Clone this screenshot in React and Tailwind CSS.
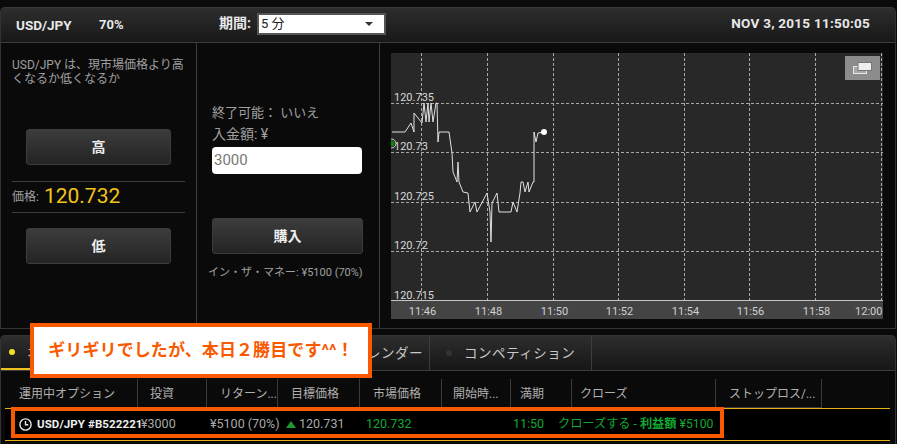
import React from 'react';

const FONT = 'font-["Roboto","Noto_Sans_CJK_JP",sans-serif]';

const xGrid = [421.5, 487.5, 553.5, 618.5, 684.5, 749.5, 815.5, 881.5];
const yGrid = [103.5, 152.5, 202.5, 251.5];
const xLabels = ['11:46', '11:48', '11:50', '11:52', '11:54', '11:56', '11:58', '12:00'];
const yLabels = [
    ['120.735', 394, 101],
    ['120.73', 394, 150],
    ['120.725', 394, 200],
    ['120.72', 394, 249],
    ['120.715', 394, 299],
];

// price line, page coordinates
const linePoints = [
    [392, 132], [405, 132], [411, 123], [414, 132], [414, 113], [422, 123], [424, 103], [426, 122], [428, 103], [429, 122],
    [431, 103], [433, 122], [436, 103], [437, 103], [438, 142], [439, 132], [449, 132], [452, 153], [453, 172], [457, 182],
    [458, 162], [459, 182], [463, 192], [468, 193], [470, 212], [475, 202], [477, 212], [487, 193], [490, 212], [491, 242],
    [492, 203], [497, 193], [499, 212], [511, 212], [513, 202], [517, 212], [520, 193], [521, 182], [523, 182], [525, 192],
    [528, 182], [529, 192], [533, 182], [534, 182], [534, 132], [536, 142], [538, 133], [544, 132],
];

const headers = [
    ['運用中オプション', 'w-[137px] pl-[18px]'],
    ['投資', 'w-[69px] pl-[12px]'],
    ['リターン...', 'w-[71px] pl-[13px]'],
    ['目標価格', 'w-[82px] pl-[13px]'],
    ['市場価格', 'w-[82px] pl-[13px]'],
    ['開始時...', 'w-[69px] pl-[11px]'],
    ['満期', 'w-[61px] pl-[9px]'],
    ['クローズ', 'w-[144px] pl-[8px]'],
    ['ストップロス/...', 'w-[106px] pl-[13px]'],
];

const Button = ({ children, className }) => (
    <button className={`flex items-center justify-center rounded-[3px] border border-[#3c3c3c] bg-gradient-to-b from-[#3c3c3c] to-[#242424] font-bold text-[#eeeeee] ${className}`}>
        {children}
    </button>
);

const Chart = () => (
    <div className="relative h-[266px] w-[492px] bg-[#282828]">
        <svg className="absolute left-0 top-0" width="492" height="266" viewBox="391 53 492 266">
            <rect x="391" y="300" width="492" height="19" fill="#444444" />
            <rect x="391" y="300" width="492" height="1" fill="#c4c4c4" />
            {xGrid.map((x) => (
                <line key={x} x1={x} x2={x} y1="53" y2="300" stroke="#a8a8a8" strokeDasharray="3 2" />
            ))}
            {yGrid.map((y) => (
                <line key={y} x1="391" x2="883" y1={y} y2={y} stroke="#a8a8a8" strokeDasharray="3 2" />
            ))}
            <polyline points={linePoints.map((p) => p.join(',')).join(' ')} fill="none" stroke="#e0e0e0" strokeWidth="1" />
            <circle cx="544" cy="132" r="3" fill="#ffffff" />
            {yLabels.map(([t, x, y]) => (
                <text key={t} x={x} y={y} fontSize="11" fill="#d8d8d8" fontFamily="Roboto, sans-serif">{t}</text>
            ))}
            <circle cx="391.5" cy="143.5" r="4.5" fill="#282828" stroke="#d8d8d8" />
            <circle cx="391.5" cy="143.5" r="3" fill="#0a8a0a" />
            {xLabels.map((t, i) => (
                <text key={t} x={xGrid[i] + 1} y="315" fontSize="11" textAnchor={i === 7 ? 'end' : 'middle'} fill="#d0d0d0" fontFamily="Roboto, sans-serif">{t}</text>
            ))}
        </svg>
        <div className="absolute right-[3px] top-[3px] flex h-[24px] w-[35px] items-center justify-center bg-[#8c8c8c]">
            <svg width="19" height="12" viewBox="0 0 19 12">
                <rect x="0.5" y="4.5" width="13" height="7" fill="#a8a8a8" stroke="#e8e8e8" />
                <rect x="5" y="0.5" width="13.5" height="8" fill="#eeeeee" stroke="#777777" />
            </svg>
        </div>
    </div>
);

export default function App() {
    return (
        <div className={`relative h-[444px] w-[897px] overflow-hidden bg-[#0a0a0a] pt-[7px] ${FONT}`}>
            {/* Trade panel */}
            <div className="h-[322px] w-[896px] rounded-t-[5px] border border-[#333333] border-t-[#3a3a3a]">
                <div className="flex h-[35px] items-center border-b border-[#3d3d3d] bg-gradient-to-b from-[#2e2e2e] to-[#181818] pl-[15px] pr-[25px] text-[#e8e8e8]">
                    <span className="w-[83px] text-[13.5px] font-bold">USD/JPY</span>
                    <span className="w-[120px] text-[13px] font-bold">70%</span>
                    <span className="mb-[3px] mr-[6px] text-[14px] font-bold">期間:</span>
                    <div className="mb-[3px] flex h-[22px] w-[129px] items-center justify-between border-2 border-[#555555] bg-white pl-[2px] pr-[11px] text-[13px] text-[#222222]">
                        5 分
                        <span className="h-0 w-0 border-x-[4px] border-t-[4px] border-x-transparent border-t-[#333333]" />
                    </div>
                    <span className="mb-[3px] ml-auto text-[13.5px] font-bold tracking-[0.25px]">NOV 3, 2015 11:50:05</span>
                </div>
                <div className="flex h-[285px]">
                    <div className="flex w-[196px] flex-col border-r border-[#3d3d3d] px-[11px]">
                        <p className="mt-[15px] h-[64px] text-[12px] leading-[14px] text-[#a0a0a0]">USD/JPY は、現市場価格より高くなるか低くなるか</p>
                        <Button className="ml-[14px] mt-[7px] h-[36px] w-[145px] text-[14px]">高</Button>
                        <div className="mt-[16px] flex h-[32px] items-center border-y border-[#3d3d3d] text-[#a0a0a0]">
                            <span className="text-[12px]">価格:</span>
                            <span className="ml-[5px] text-[21px] text-[#f2c31b]">120.732</span>
                        </div>
                        <Button className="ml-[14px] mt-[15px] h-[36px] w-[145px] text-[14px]">低</Button>
                    </div>
                    <div className="flex w-[183px] flex-col border-r border-[#3d3d3d] px-[15px]">
                        <p className="mt-[61px] text-[13px] leading-[18px] text-[#a0a0a0]">終了可能： いいえ</p>
                        <p className="mt-[2px] text-[14px] leading-[20px] text-[#a0a0a0]">入金額: ¥</p>
                        <div className="mt-[3px] flex h-[27px] w-[150px] items-center rounded-[4px] bg-white pl-[2px] text-[15px] text-[#777777]">3000</div>
                        <Button className="mt-[44px] h-[36px] w-[151px] text-[14px]">購入</Button>
                        <p className="-ml-[4px] mt-[11px] whitespace-nowrap text-[11px] text-[#a0a0a0]">イン・ザ・マネー: ¥5100 (70%)</p>
                    </div>
                    <div className="ml-[11px] mt-[10px]">
                        <Chart />
                    </div>
                </div>
            </div>

            {/* Options table */}
            <div className="mt-[6px] h-[110px] w-[896px] rounded-t-[5px] border-x border-t border-[#333333]">
                <div className="flex h-[35px] border-b border-[#3d3d3d] bg-gradient-to-b from-[#2e2e2e] to-[#161616] text-[13.5px] tracking-[0.5px] text-[#c8c8c8]">
                    <div className="flex w-[118px] items-center border-b-2 border-b-[#f0c020] border-r border-r-[#3d3d3d] pl-[8px]">
                        <span className="h-[6px] w-[6px] rounded-full bg-[#f4e020]" />
                        <span className="ml-[12px]">オプション</span>
                    </div>
                    <div className="flex w-[311px] items-center justify-end border-r border-[#3d3d3d] pr-[6px]">経済カレンダー</div>
                    <div className="flex w-[162px] items-center border-r border-[#3d3d3d] pl-[16px]">
                        <span className="h-[6px] w-[6px] rounded-full bg-[#333333]" />
                        <span className="ml-[12px]">コンペティション</span>
                    </div>
                </div>
                <div className="flex h-[37px] items-end text-[12px] text-[#b0b0b0]">
                    {headers.map(([t, c], i) => (
                        <div key={t} className={`flex h-[29px] items-center whitespace-nowrap border-r border-[#3a3a3a] pt-[1px] ${i === 8 ? 'border-b' : ''} ${c}`}>{t}</div>
                    ))}
                </div>
                <div className="ml-[4px] flex h-[33px] w-[885px] items-center border-y border-[#e8b010] bg-black text-[12.5px] text-[#a8a8a8]">
                    <svg className="ml-[14px]" width="13" height="13" viewBox="0 0 13 13" fill="none" stroke="#e8e8e8" strokeWidth="1.4">
                        <circle cx="6.5" cy="6.5" r="5.6" />
                        <path d="M6.5 3v3.7h2.8" />
                    </svg>
                    <span className="ml-[5px] w-[104px] whitespace-nowrap text-[11.5px] font-bold tracking-[0.1px] text-[#eeeeee]">USD/JPY #B522221</span>
                    <span className="w-[69px]">¥3000</span>
                    <span className="w-[76px] whitespace-nowrap">¥5100 (70%)</span>
                    <span className="h-0 w-0 border-x-[5px] border-b-[7px] border-x-transparent border-b-[#1c9a32]" />
                    <span className="ml-[3px] w-[67px]">120.731</span>
                    <span className="w-[147px] text-[#12a832]">120.732</span>
                    <span className="w-[45px] text-[#12a832]">11:50</span>
                    <span className="whitespace-nowrap text-[12.2px] text-[#12a832]">クローズする - <span className="font-bold">利益額</span> ¥5100</span>
                </div>
            </div>

            {/* Annotations over the screenshot */}
            <div className="absolute left-[30px] top-[323px] flex h-[55px] w-[342px] items-center justify-center border-[4px] border-[#f95a00] bg-white text-[17px] font-bold tracking-[0.1px] text-[#f95a00]">
                ギリギリでしたが、本日２勝目です^^！
            </div>
            <div className="absolute left-[11px] top-[407px] h-[31px] w-[713px] border-[4px] border-[#f95a00]" />
        </div>
    );
}
